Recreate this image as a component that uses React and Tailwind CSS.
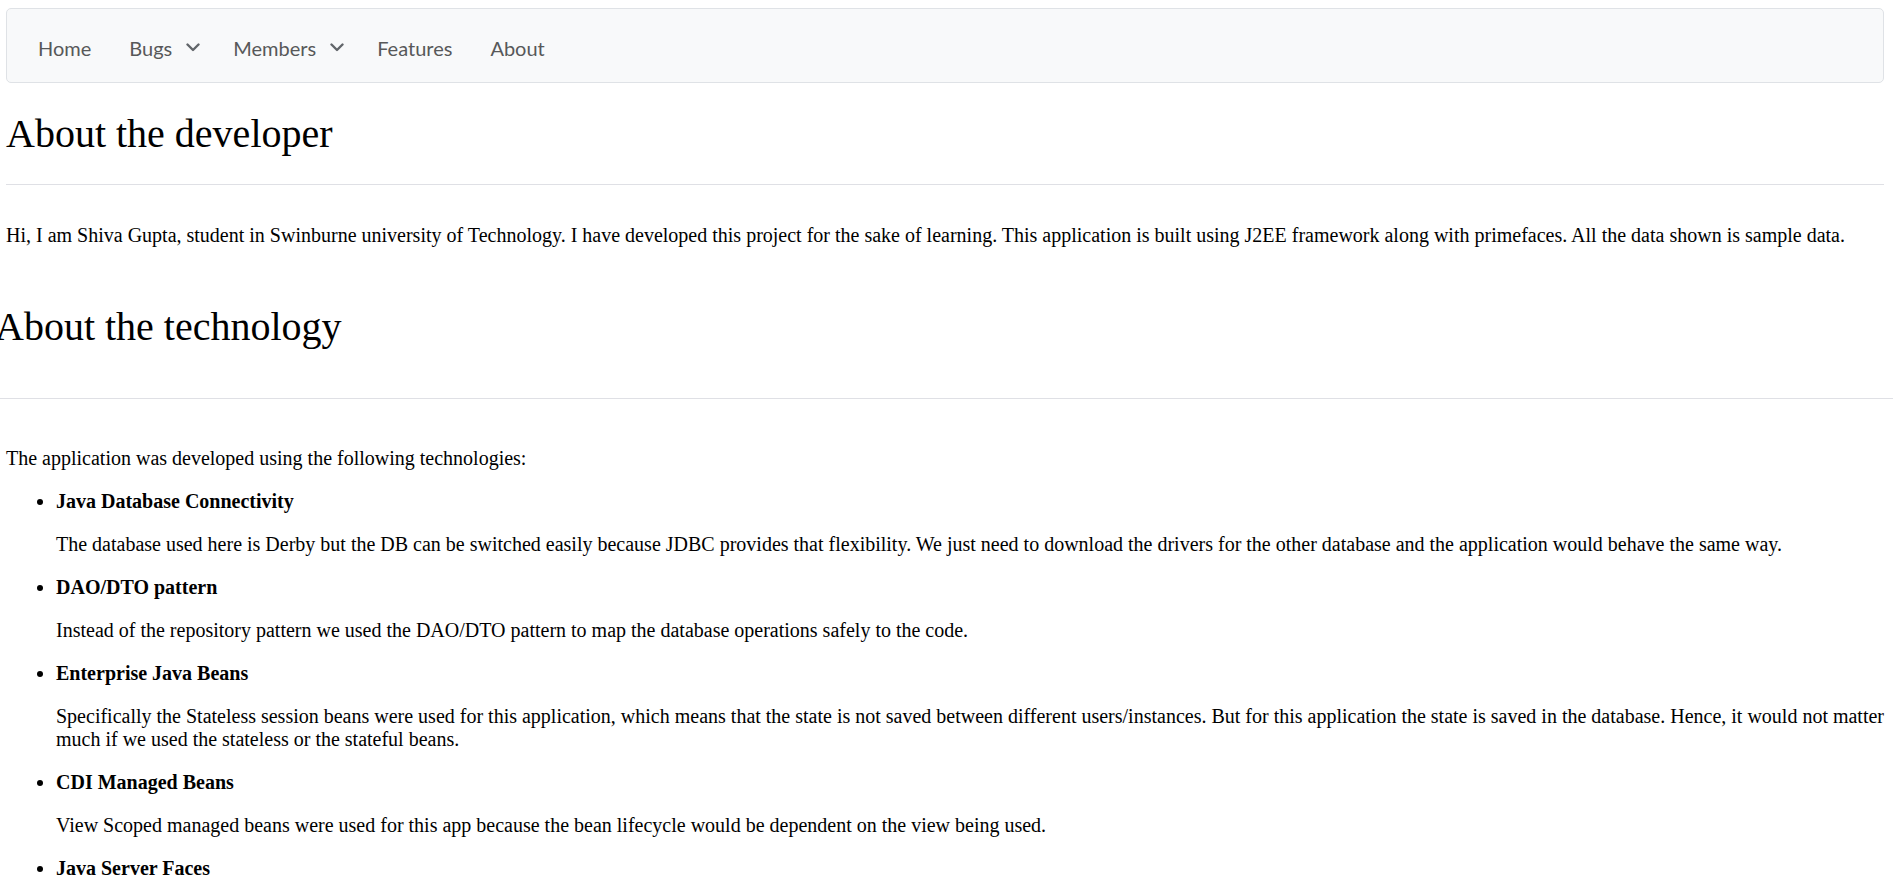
const navItems = [
  { name: "Home" },
  { name: "Bugs", dropdown: true },
  { name: "Members", dropdown: true },
  { name: "Features" },
  { name: "About" },
];

const technologies = [
  {
    title: "Java Database Connectivity",
    text: "The database used here is Derby but the DB can be switched easily because JDBC provides that flexibility. We just need to download the drivers for the other database and the application would behave the same way.",
  },
  {
    title: "DAO/DTO pattern",
    text: "Instead of the repository pattern we used the DAO/DTO pattern to map the database operations safely to the code.",
  },
  {
    title: "Enterprise Java Beans",
    text: "Specifically the Stateless session beans were used for this application, which means that the state is not saved between different users/instances. But for this application the state is saved in the database. Hence, it would not matter much if we used the stateless or the stateful beans.",
  },
  {
    title: "CDI Managed Beans",
    text: "View Scoped managed beans were used for this app because the bean lifecycle would be dependent on the view being used.",
  },
  { title: "Java Server Faces" },
];

function Chevron() {
  return (
    <svg
      width="14"
      height="9"
      viewBox="0 0 14 9"
      fill="none"
      stroke="currentColor"
      strokeWidth="2.4"
      strokeLinecap="round"
      strokeLinejoin="round"
      className="ml-[14px] text-[#62666a]"
    >
      <path d="M1.5 1.5 7 7l5.5-5.5" />
    </svg>
  );
}

function Navbar() {
  return (
    <nav className="mt-2 h-[75px] rounded-[5px] border border-[#dfe2e6] bg-[#f8f9fa] flex items-center pl-[12px] pt-1">
      <ul className="flex items-center">
        {navItems.map((item) => (
          <li key={item.name}>
            <a
              href="#"
              className={`flex items-center text-[20px] leading-[30px] text-[#575859] font-['Lato',sans-serif] ${
                item.dropdown ? "pl-[19px] pr-[14px]" : "px-[19px]"
              }`}
            >
              {item.name}
              {item.dropdown && <Chevron />}
            </a>
          </li>
        ))}
      </ul>
    </nav>
  );
}

export default function App() {
  return (
    <div className="min-h-screen bg-white text-black font-['Liberation_Serif','Times_New_Roman',serif] overflow-hidden">
      {/* developer section */}
      <div className="pl-[6px] pr-[9px]">
        <Navbar />
        <h1 className="mt-[28px] text-[40px] leading-[46px] font-normal">About the developer</h1>
        <hr className="mt-[27px] border-[#dfe0e5]" />
        <p className="mt-[39px] text-[20px] leading-[23px]">
          Hi, I am Shiva Gupta, student in Swinburne university of Technology. I have developed this project for the
          sake of learning. This application is built using J2EE framework along with primefaces. All the data shown is
          sample data.
        </p>
      </div>

      {/* technology section */}
      <h1 className="mt-[57px] -ml-[5px] text-[40px] leading-[46px] font-normal">About the technology</h1>
      <hr className="mt-[48px] border-[#dfe0e5]" />
      <div className="pl-[6px] text-[20px] leading-[23px]">
        <p className="mt-[48px]">The application was developed using the following technologies:</p>
        <ul className="mt-5 pl-[50px] list-disc">
          {technologies.map((tech) => (
            <li key={tech.title}>
              <b className="font-bold">{tech.title}</b>
              {tech.text && <p className="my-5">{tech.text}</p>}
            </li>
          ))}
        </ul>
      </div>
    </div>
  );
}
